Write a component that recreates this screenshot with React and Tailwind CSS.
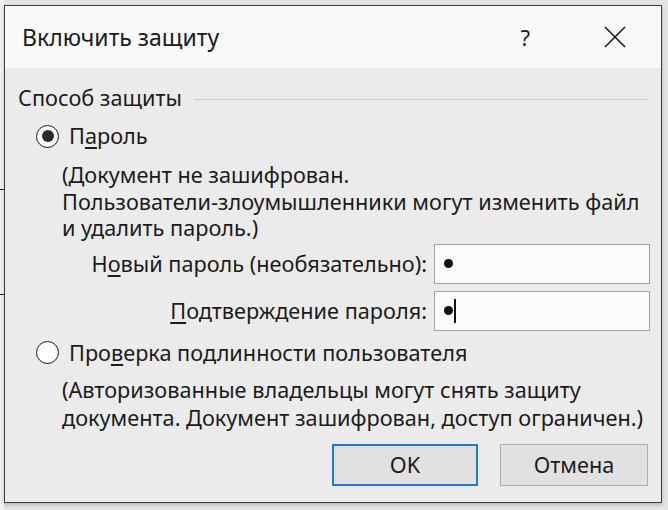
import React from 'react';

const font = { fontFamily: '"Noto Sans", "Open Sans", sans-serif' };

function Radio({ checked }) {
  return (
    <span className="flex h-[23px] w-[23px] shrink-0 items-center justify-center rounded-full border-[1.5px] border-[#1a1a1a] bg-white">
      {checked && <span className="h-[12px] w-[12px] rounded-full bg-[#2b2b2b]" />}
    </span>
  );
}

function Field({ label, caret }) {
  return (
    <div className="flex items-center justify-end">
      <span className="mr-[7px]">{label}</span>
      <div className="flex h-[40px] w-[216px] items-center border border-[#a3a3a3] bg-[#fbfbfb] pl-[9px]">
        <span className="h-[9px] w-[9px] rounded-full bg-[#111]" />
        {caret && <span className="ml-[1px] h-[24px] w-[2px] bg-[#111]" />}
      </div>
    </div>
  );
}

export default function App() {
  return (
    <div className="flex h-[510px] w-[668px] bg-[#e4e4e4] text-[#1b1b1b]" style={font}>
      {/* window behind */}
      <div className="flex w-[4px] shrink-0 flex-col bg-[#f2f2f2] pt-[189px]">
        <div className="h-[106px] border-y border-[#222]" />
      </div>

      <div className="mt-[5px] flex h-[498px] w-[658px] flex-col border border-[#3c3c3c] bg-[#ebebeb] shadow-[0_2px_4px_rgba(0,0,0,0.2)]">
        {/* title bar */}
        <div className="flex h-[62px] shrink-0 items-center bg-[#f9f9f9] pl-[17px] pr-[35px]">
          <span className="text-[23px]">Включить защиту</span>
          <span className="ml-auto mr-[74px] text-[22px]">?</span>
          <svg width="22" height="22" viewBox="0 0 22 22">
            <path d="M1 1 L21 21 M21 1 L1 21" stroke="#1b1b1b" strokeWidth="1.6" />
          </svg>
        </div>

        <div className="flex flex-col px-[13px] text-[21.7px] leading-[28px]">
          <div className="mt-[16px] flex items-center">
            <span>Способ защиты</span>
            <span className="ml-[12px] mt-[2px] h-px flex-1 bg-[#c9c9c9]" />
          </div>

          <div className="mt-[10px] flex items-center pl-[18px]">
            <Radio checked />
            <span className="ml-[10px]">
              П<span className="underline underline-offset-[3px]">а</span>роль
            </span>
          </div>

          <div className="mt-[12px] pl-[44px] leading-[26.5px]">
            <div>(Документ не зашифрован.</div>
            <div>Пользователи-злоумышленники могут изменить файл</div>
            <div>и удалить пароль.)</div>
          </div>

          <div className="-mr-[2px] mt-[2px] flex flex-col gap-[7px]">
            <Field
              label={
                <>
                  Н<span className="underline underline-offset-[3px]">о</span>вый пароль (необязательно):
                </>
              }
            />
            <Field
              caret
              label={
                <>
                  <span className="underline underline-offset-[3px]">П</span>одтверждение пароля:
                </>
              }
            />
          </div>

          <div className="mt-[8px] flex items-center pl-[18px]">
            <Radio />
            <span className="ml-[10px]">
              Про<span className="underline underline-offset-[3px]">в</span>ерка подлинности пользователя
            </span>
          </div>

          <div className="mt-[9px] pl-[44px] leading-[28px]">
            <div>(Авторизованные владельцы могут снять защиту</div>
            <div>документа. Документ зашифрован, доступ ограничен.)</div>
          </div>

          <div className="mt-[12px] flex justify-end gap-[22px]">
            <button className="flex h-[42px] w-[146px] items-center justify-center border-2 border-[#1e7bd3] bg-[#e1e1e1]">
              OK
            </button>
            <button className="flex h-[42px] w-[148px] items-center justify-center border border-[#adadad] bg-[#e1e1e1]">
              Отмена
            </button>
          </div>
        </div>
      </div>
    </div>
  );
}
